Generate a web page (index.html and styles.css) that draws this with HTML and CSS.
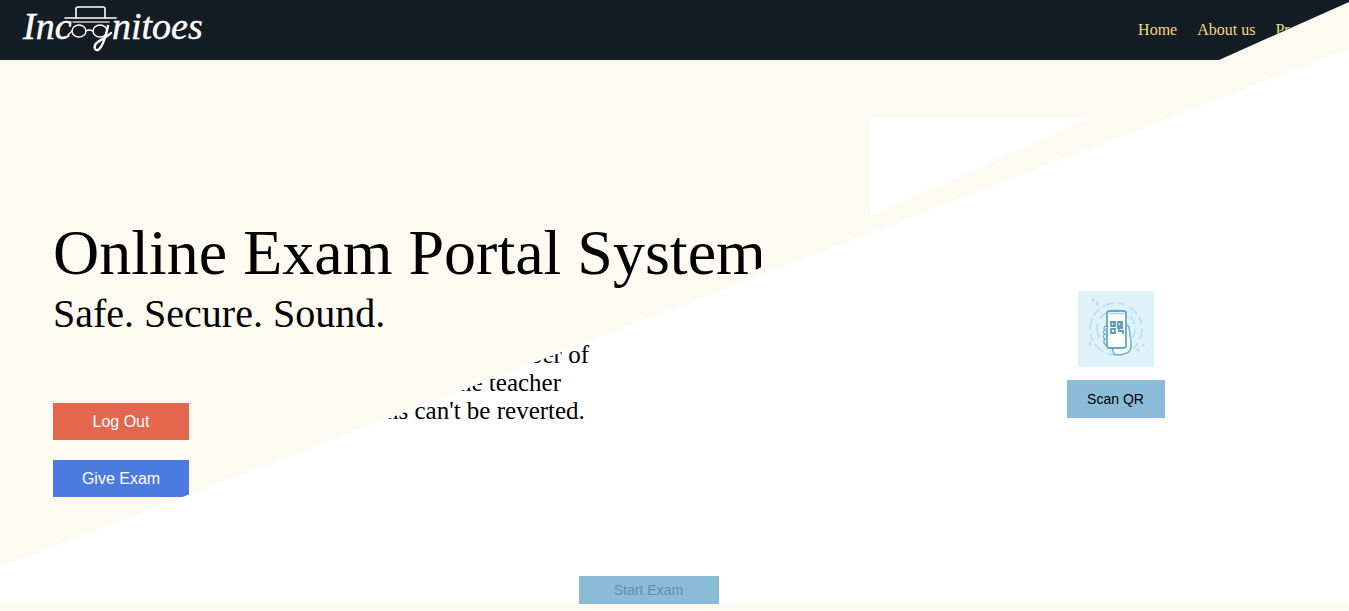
FILE: index.html
```html
<!DOCTYPE html>
<html lang="en">
<head>
<meta charset="utf-8">
<meta name="viewport" content="width=device-width, initial-scale=1">
<title>Incognitoes</title>
<link rel="stylesheet" href="styles.css">
</head>
<body>
<main class="stage">
  <section class="exam">
    <div class="notes">
      <p class="note note-number">ber of</p>
      <p class="note note-teacher">he teacher</p>
      <p class="note note-revert">ns can't be reverted.</p>
    </div>
    <div class="scan">
      <svg class="scan-art" viewBox="0 0 76 76" aria-hidden="true">
        <rect width="76" height="76" fill="#dff2f9"/>
        <g fill="none" stroke="#b9deec" stroke-width="1.6">
          <circle cx="38" cy="38" r="26" stroke-dasharray="11 4 7 5"/>
          <circle cx="38" cy="38" r="19" stroke-dasharray="9 6 15 5"/>
        </g>
        <g fill="#b5dceb">
          <circle cx="15" cy="9" r="1.5"/><circle cx="19" cy="13" r="1.7"/>
          <circle cx="12" cy="53" r="1.4"/><circle cx="65" cy="54" r="1.5"/><circle cx="60" cy="59" r="1.6"/>
        </g>
        <path d="M47 36c1-3 4-2 4 1l2 14c1 7-1 11-7 12-4 1-8 1-10 0l-2-7z" fill="#fff" stroke="#69b2d1" stroke-width="1.5"/>
        <path d="M29 35c-3 0-4 2-2 4-2 1-2 3 0 4-2 1-2 4 0 5-2 1-1 5 1 6l4 2V35z" fill="#fff" stroke="#69b2d1" stroke-width="1.4"/>
        <rect x="29" y="20" width="19" height="37" rx="2.5" fill="#fff" stroke="#5baacf" stroke-width="1.8"/>
        <path d="M31 22.500h15" stroke="#a9d6e8" stroke-width="1.6"/>
        <g fill="none" stroke="#5b9fc0" stroke-width="1.8">
          <path d="M33 31h4v4h-4zM40 31h4v4h-4zM33 38h4v4h-4z"/>
          <path d="M39 37h2v4M42 37h3M41 40h4v3M35 33h1M42 33h1"/>
        </g>
      </svg>
      <button class="btn-scan" type="button">Scan QR</button>
    </div>
    <div class="start-row">
      <button class="btn-start" type="button" disabled>Start Exam</button>
    </div>
  </section>

  <section class="home">
    <header class="topbar">
      <a class="brand" href="#" aria-label="Incognitoes">
        <svg class="logo" viewBox="0 0 190 52">
          <g class="logo-text">
            <text x="3" y="39">Inc</text>
            <text x="92" y="39">nitoes</text>
          </g>
          <g fill="none" stroke="#fff" stroke-linecap="round">
            <path d="M56 18V9q0-2 2-2h25q2 0 2 2v9" stroke-width="1.6"/>
            <path d="M45 18h51" stroke-width="1.6"/>
            <path d="M53 22h36" stroke="#c2c8cc" stroke-width="1.6"/>
            <ellipse cx="59" cy="31" rx="7" ry="6" stroke-width="1.4"/>
            <ellipse cx="80" cy="31" rx="7" ry="6" stroke-width="1.4"/>
            <path d="M66 31q3-2 7 0M48 35l4-4" stroke-width="1.4"/>
            <path d="M88 26C86 35 83 47 78 50c-4 1-5-5 0-8 4-3 9-5 13-9" stroke-width="2.4"/>
          </g>
        </svg>
      </a>
      <nav class="nav">
        <a href="#">Home</a>
        <a href="#">About us</a>
        <a href="#">Profile</a>
      </nav>
    </header>
    <div class="hero">
      <div class="copy">
        <h1 class="title">Online Exam Portal System</h1>
        <p class="tagline">Safe. Secure. Sound.</p>
        <div class="actions">
          <button class="btn btn-logout" type="button">Log Out</button>
          <button class="btn btn-give" type="button">Give Exam</button>
        </div>
      </div>
      <div class="wedge"></div>
    </div>
  </section>
</main>
</body>
</html>
```
FILE: styles.css
```css
* {
  box-sizing: border-box;
}

body {
  margin: 0;
  background: #fdfaf2;
  color: #000;
  font-family: "Liberation Serif", "Times New Roman", serif;
}

h1, p {
  margin: 0;
  font-weight: 400;
}

button {
  border: 0;
  padding: 0;
  font-family: "Liberation Sans", Arial, sans-serif;
}

.stage {
  display: grid;
  min-height: calc(100vh - 7px);
}

.exam,
.home {
  grid-area: 1 / 1;
  min-width: 0;
}

.exam {
  display: grid;
  grid-template-columns: 882fr 467fr;
  grid-template-rows: 1fr auto;
  background: #fff;
}

.notes {
  padding-top: 341px;
  clip-path: polygon(0 568px, 100% 229px, 100% 100%, 0 100%);
}

.note {
  font-size: 25px;
  line-height: 28px;
  white-space: nowrap;
}

.note-number { padding-left: 530px; }
.note-teacher { padding-left: 459px; }
.note-revert { padding-left: 386px; }

.scan {
  display: flex;
  flex-direction: column;
  align-items: center;
  gap: 13px;
  padding-top: 291px;
}

.scan-art {
  width: 76px;
  height: 76px;
}

.btn-scan {
  width: 98px;
  height: 38px;
  background: #8abcd8;
  color: #000;
  font-size: 14px;
}

.start-row {
  grid-column: 1 / -1;
  display: flex;
  justify-content: center;
  padding-right: 52px;
}

.btn-start {
  width: 140px;
  height: 28px;
  background: #8abcd8;
  color: #648fa9;
  font-size: 14px;
}

.home {
  background: #fdfaf2;
  clip-path: polygon(0 0, 100% 0, 100% 49px, 0 567px);
}

.topbar {
  display: flex;
  align-items: center;
  justify-content: space-between;
  height: 60px;
  padding: 0 30px 0 20px;
  background: #151d24;
  clip-path: polygon(0 0, 100% 0, 100% 2px, calc(100% - 130px) 100%, 0 100%);
}

.brand {
  display: flex;
  align-self: flex-start;
}

.logo {
  width: 190px;
  height: 52px;
}

.logo-text {
  fill: #fff;
  stroke: #fff;
  stroke-width: 0.4;
  font-size: 38px;
  font-style: italic;
}

.nav {
  display: flex;
  gap: 20px;
}

.nav a {
  color: #f0d880;
  font-size: 16px;
  line-height: 18px;
  text-decoration: none;
}

.hero {
  display: grid;
  grid-template-columns: 818fr 478fr;
  padding-left: 53px;
}

.copy {
  padding-top: 157px;
}

.title {
  width: fit-content;
  font-size: 64px;
  line-height: 72px;
  white-space: nowrap;
  clip-path: polygon(0 0, 100% 0, 100% 48px, 692px 58px, 661px 100%, 0 100%);
}

.tagline {
  font-size: 40px;
  line-height: 50px;
}

.actions {
  display: flex;
  flex-direction: column;
  gap: 20px;
  padding-top: 64px;
}

.btn {
  width: 136px;
  height: 37px;
  color: #fff;
  font-size: 16px;
}

.btn-logout { background: #e2674e; }
.btn-give { background: #4c7be0; }

.wedge {
  width: 219px;
  height: 98px;
  margin-top: 58px;
  background: #fff;
  clip-path: polygon(0 0, 100% 0, 0 100%);
}
```
